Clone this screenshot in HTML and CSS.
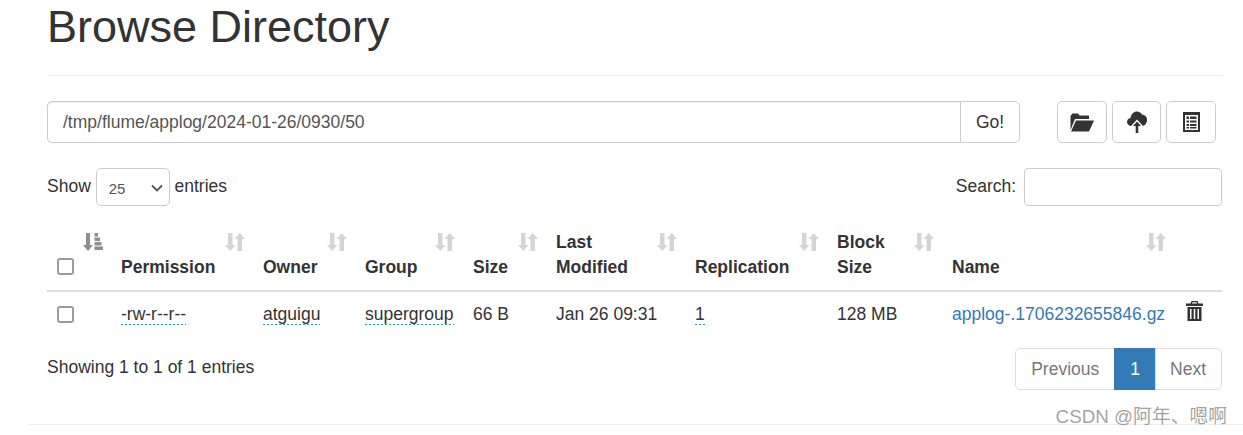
FILE: index.html
```html
<!DOCTYPE html>
<html lang="en">
<head>
    <meta charset="UTF-8">
    <title>Browse Directory</title>
    <link rel="stylesheet" href="styles.css">
</head>
<body>
    <svg class="defs" width="0" height="0">
        <symbol id="i-sort" viewBox="0 0 20 18"><path d="M3 0h4.500v12H10.500L5.250 18 0 12h3zM12.500 18V6H9.500l5.250-6L20 6h-3v12z"/></symbol>
        <symbol id="i-sort-on" viewBox="0 0 20 18"><path d="M3 0h4v12h3L5 18 0 12h3zM11.500 0h3.500v3.500h-3.500zM11.500 4.500h5.500v3.500h-5.500zM11.500 9h7v3.500h-7zM11.500 13.500h8.500v3.500h-8.500z"/></symbol>
    </svg>
    <div class="container">
        <h1 class="title">Browse Directory</h1>

        <div class="toolbar">
            <div class="path-group">
                <input class="path-input" type="text" value="/tmp/flume/applog/2024-01-26/0930/50">
                <button class="go-btn">Go!</button>
            </div>
            <div class="tool-btns">
                <button class="tool-btn">
                    <svg width="24" height="19" viewBox="0 0 24 19"><path d="M0.500 17V3L2.500 0.500h5.500L9.500 2.500h9.500V6H5zM6 7.500H24L19 18.500H1z" fill="#333"/></svg>
                </button>
                <button class="tool-btn tool-narrow">
                    <svg width="20" height="22" viewBox="0 0 20 22"><path d="M4.500 15C1.800 15 0 13.200 0 11 0 9 1.500 7.300 3.500 7 4 3.200 6.800 0.500 10 0.500c2.300 0 4.300 1.300 5.200 3.300 2.700 0 4.800 2.200 4.800 5.200 0 3.300-2.300 6-5 6z" fill="#333"/><path d="M10 8.500l6 6.500h-3.300v7H7.300v-7H4z" fill="#fff"/><path d="M10 10.500l4 4.500h-2.700v7H8.700v-7H6z" fill="#333"/></svg>
                </button>
                <button class="tool-btn">
                    <svg width="17" height="20" viewBox="0 0 17 20"><path fill-rule="evenodd" d="M0 0h17v20H0zM2 3v15h13V3zM3.500 4.500h2.500v2.500H3.500zM7 4.500h6.500v2.500H7zM3.500 8.500h2.500v2H3.500zM7 8.500h6.500v2H7zM3.500 12h2.500v2H3.500zM7 12h6.500v2H7zM3.500 15h2.500v1.500H3.500zM7 15h6.500v1.500H7z" fill="#333"/></svg>
                </button>
            </div>
        </div>

        <div class="filter-row">
            <label class="show-entries">Show
                <span class="select-wrap">
                    <select class="entries-select"><option>25</option></select>
                    <svg class="select-arrow" width="12" height="8" viewBox="0 0 12 8"><path d="M1 1.500l5 5 5-5" fill="none" stroke="#555" stroke-width="1.800"/></svg>
                </span>
                entries</label>
            <label class="search-box">Search:
                <input class="search-input" type="text">
            </label>
        </div>

        <table class="files">
            <colgroup>
                <col class="c-check"><col class="c-perm"><col class="c-owner"><col class="c-group"><col class="c-size">
                <col class="c-date"><col class="c-repl"><col class="c-block"><col class="c-name"><col class="c-del">
            </colgroup>
            <thead>
                <tr>
                    <th class="cell-check"><input class="check check-head" type="checkbox"><svg class="sort-icon sort-on"><use href="#i-sort-on"/></svg></th>
                    <th>Permission<svg class="sort-icon"><use href="#i-sort"/></svg></th>
                    <th>Owner<svg class="sort-icon"><use href="#i-sort"/></svg></th>
                    <th>Group<svg class="sort-icon"><use href="#i-sort"/></svg></th>
                    <th>Size<svg class="sort-icon"><use href="#i-sort"/></svg></th>
                    <th>Last Modified<svg class="sort-icon"><use href="#i-sort"/></svg></th>
                    <th>Replication<svg class="sort-icon"><use href="#i-sort"/></svg></th>
                    <th>Block Size<svg class="sort-icon"><use href="#i-sort"/></svg></th>
                    <th>Name<svg class="sort-icon"><use href="#i-sort"/></svg></th>
                    <th></th>
                </tr>
            </thead>
            <tbody>
                <tr>
                    <td class="cell-check"><input class="check" type="checkbox"></td>
                    <td><span class="hint">-rw-r--r--</span></td>
                    <td><span class="hint">atguigu</span></td>
                    <td><span class="hint">supergroup</span></td>
                    <td>66 B</td>
                    <td>Jan 26 09:31</td>
                    <td><span class="hint">1</span></td>
                    <td>128 MB</td>
                    <td><a class="file-link" href="#">applog-.1706232655846.gz</a></td>
                    <td class="cell-del">
                        <svg width="17" height="20" viewBox="0 0 17 20"><path fill-rule="evenodd" d="M5.500 0h6L12.500 2.500H17v2.500H0V2.500h4.500zM6.500 1.300L6 2.500h5l-.5-1.200zM1.500 6h14v14h-14zM4 8v10h1.500V8zM7.750 8v10h1.500V8zM11.500 8v10H13V8z" fill="#333"/></svg>
                    </td>
                </tr>
            </tbody>
        </table>

        <div class="table-foot">
            <div class="info">Showing 1 to 1 of 1 entries</div>
            <div class="pager">
                <a class="page page-first" href="#">Previous</a>
                <a class="page page-on" href="#">1</a>
                <a class="page page-last" href="#">Next</a>
            </div>
        </div>

        <div class="footer-line"></div>
    </div>
    <div class="watermark">CSDN @阿年、嗯啊</div>
</body>
</html>
```

FILE: styles.css
```css
* {
    box-sizing: border-box;
}

html, body {
    height: 435px;
    overflow: hidden;
}

body {
    margin: 0;
    font-family: "Liberation Sans", Arial, sans-serif;
    font-size: 17.5px;
    line-height: 25px;
    color: #333;
    background-color: #fff;
}

.defs {
    display: block;
    height: 0;
}

.container {
    padding: 2px 21px 0 47px;
}

.title {
    margin: 0;
    padding-bottom: 23px;
    font-size: 45px;
    font-weight: 400;
    line-height: 50px;
    border-bottom: 1px solid #eee;
}

.toolbar {
    display: flex;
    justify-content: space-between;
    margin-top: 25px;
    padding-right: 6px;
}

.path-group {
    display: flex;
    width: 973px;
    height: 42px;
}

.path-input {
    flex: 1;
    padding: 0 15px;
    font: inherit;
    color: #555;
    border: 1px solid #ccc;
    border-right: none;
    border-radius: 5px 0 0 5px;
    box-shadow: inset 0 1px 1px rgba(0, 0, 0, .075);
}

.go-btn {
    width: 60px;
    font: inherit;
    color: #333;
    background-color: #fff;
    border: 1px solid #ccc;
    border-radius: 0 5px 5px 0;
}

.tool-btns {
    display: flex;
    gap: 5px;
}

.tool-btn {
    display: flex;
    align-items: center;
    justify-content: center;
    width: 50px;
    height: 42px;
    padding: 0;
    background-color: #fff;
    border: 1px solid #ccc;
    border-radius: 5px;
}

.tool-narrow {
    width: 49px;
}

.filter-row {
    display: flex;
    justify-content: space-between;
    align-items: center;
    height: 38px;
    margin-top: 25px;
}

.select-wrap {
    position: relative;
    display: inline-flex;
    vertical-align: middle;
}

.entries-select {
    width: 74px;
    height: 38px;
    padding: 2px 12px 0;
    font-family: inherit;
    font-size: 15px;
    color: #555;
    background-color: #fff;
    border: 1px solid #ccc;
    border-radius: 5px;
    appearance: none;
}

.select-arrow {
    position: absolute;
    top: 16px;
    right: 7px;
    pointer-events: none;
}

.search-input {
    width: 198px;
    height: 38px;
    margin-left: 3px;
    vertical-align: middle;
    border: 1px solid #ccc;
    border-radius: 4px;
}

.files {
    width: 100%;
    margin-top: 14px;
    table-layout: fixed;
    border-collapse: collapse;
}

.c-check { width: 66px; }
.c-perm { width: 142px; }
.c-owner { width: 102px; }
.c-group { width: 108px; }
.c-size { width: 83px; }
.c-date { width: 139px; }
.c-repl { width: 142px; }
.c-block { width: 115px; }
.c-name { width: 232px; }
.c-del { width: 46px; }

.files th,
.files td {
    padding: 10px 8px;
    text-align: left;
}

.files th {
    position: relative;
    padding-right: 30px;
    vertical-align: bottom;
    font-weight: 700;
    border-bottom: 2px solid #ddd;
}

.files td {
    vertical-align: top;
}

.files .cell-check {
    padding-left: 10px;
    padding-right: 0;
}

.check {
    display: block;
    width: 17px;
    height: 17px;
    margin: 4px 0 0;
    background-color: #fff;
    border: 2px solid #9a9aa6;
    border-radius: 3px;
    appearance: none;
}

.check-head {
    margin: 0 0 5px;
}

.sort-icon {
    position: absolute;
    top: 13px;
    right: 10px;
    width: 20px;
    height: 18px;
    fill: #333;
    opacity: .2;
}

.sort-on {
    opacity: .55;
}

.hint {
    padding-bottom: 1px;
    background-image: linear-gradient(to right, #1a9ae0 50%, transparent 50%);
    background-position: 0 100%;
    background-size: 4px 1px;
    background-repeat: repeat-x;
}

.file-link {
    color: #337ab7;
    text-decoration: none;
}

.files .cell-del {
    padding: 9px 0 0 10px;
    line-height: 0;
}

.table-foot {
    display: flex;
    justify-content: space-between;
    margin-top: 11px;
}

.info {
    padding-top: 7px;
}

.pager {
    display: flex;
    height: 42px;
}

.page {
    padding: 8px 15px;
    color: #777;
    text-decoration: none;
    background-color: #fff;
    border: 1px solid #ddd;
    margin-left: -1px;
}

.page-first {
    border-radius: 5px 0 0 5px;
}

.page-last {
    padding-left: 14px;
    border-radius: 0 5px 5px 0;
}

.page-on {
    color: #fff;
    background-color: #337ab7;
    border-color: #337ab7;
}

.footer-line {
    margin: 34px -21px 0 -19px;
    border-top: 1px solid #eee;
}

.watermark {
    position: absolute;
    top: 404px;
    right: 16px;
    font-family: "Liberation Sans", "Noto Sans CJK SC", sans-serif;
    font-size: 18.8px;
    color: rgba(120, 120, 120, .7);
}
```
